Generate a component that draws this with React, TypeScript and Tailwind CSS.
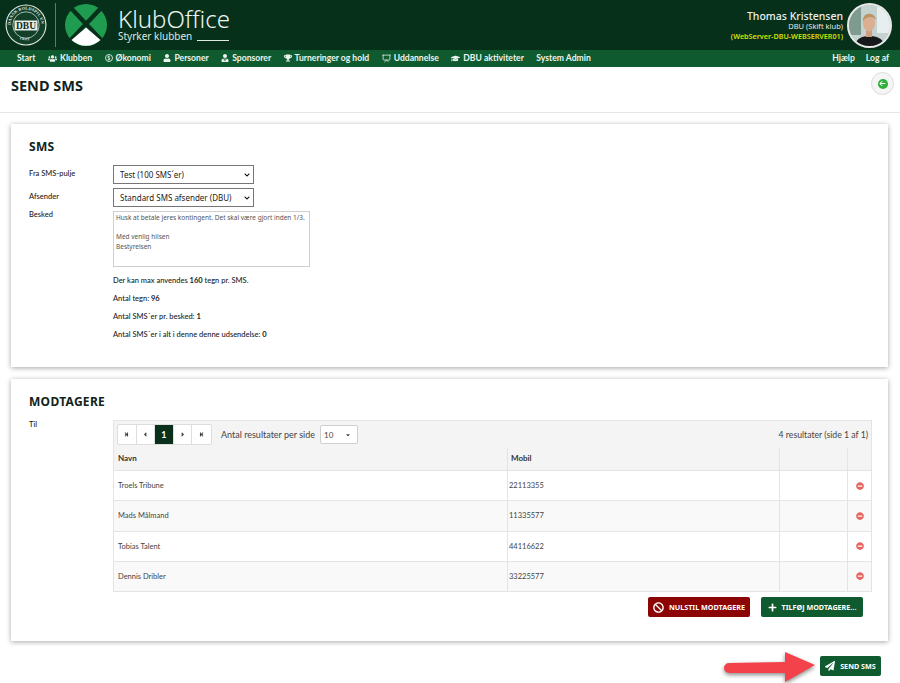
import { ReactNode } from "react";
import {
  FaBan,
  FaCaretDown,
  FaChevronDown,
  FaGraduationCap,
  FaMinusCircle,
  FaPaperPlane,
  FaPlus,
  FaStepBackward,
  FaStepForward,
  FaTrophy,
  FaUser,
  FaUserTie,
  FaUsers,
} from "react-icons/fa";
import { FaArrowLeft } from "react-icons/fa6";
import { Presentation } from "lucide-react";

const rows = [
  { name: "Troels Tribune", mobile: "22113355" },
  { name: "Mads Målmand", mobile: "11335577" },
  { name: "Tobias Talent", mobile: "44116622" },
  { name: "Dennis Dribler", mobile: "33225577" },
];

function DbuLogo() {
  return (
    <svg width="42" height="42" viewBox="0 0 42 42" className="shrink-0">
      <defs>
        <path id="ring-top" d="M5.6 21 a15.4 15.4 0 0 1 30.8 0" />
        <path id="ring-bottom" d="M10 32 a16.5 16.5 0 0 0 22 0" />
      </defs>
      <circle cx="21" cy="21" r="20.5" fill="#e4ebe6" />
      <circle cx="21" cy="21" r="19.4" fill="#123f27" />
      <text fontSize="4.2" fontWeight="600" fill="#e8eeea" fontFamily="'Liberation Serif', serif" letterSpacing="0.2">
        <textPath href="#ring-top">DANSK BOLDSPIL UNION</textPath>
      </text>
      <text fontSize="4.2" fontWeight="600" fill="#e8eeea" fontFamily="'Liberation Serif', serif" letterSpacing="0.6">
        <textPath href="#ring-bottom" startOffset="5">1889</textPath>
      </text>
      <circle cx="21" cy="21" r="13.2" fill="#123f27" stroke="#e4ebe6" strokeWidth="0.7" />
      <rect x="9.5" y="16.5" width="23" height="10" fill="#e8eeea" />
      <text x="21" y="25" textAnchor="middle" fontSize="9.5" fontWeight="800" fill="#0b2d19" fontFamily="'Liberation Serif', serif">
        DBU
      </text>
    </svg>
  );
}

function KlubLogo() {
  return (
    <svg width="42" height="42" viewBox="0 0 42 42" className="shrink-0">
      <circle cx="21" cy="21" r="21" fill="#1f9c50" />
      <path d="M5 3 L37 37 M37 3 L5 37" stroke="#06301a" strokeWidth="4.5" />
      <path d="M6.5 36 L21 23.5 L35.5 36 A21 21 0 0 1 6.5 36 Z" fill="#ffffff" />
    </svg>
  );
}

function Avatar() {
  return (
    <div className="h-[45px] w-[45px] shrink-0 overflow-hidden rounded-full border-2 border-[#e8e8e8] bg-[#b9c9c4]">
      <svg width="41" height="41" viewBox="0 0 41 41">
        <rect width="41" height="41" fill="#c4d3cf" />
        <rect x="0" y="0" width="12" height="30" fill="#7f9a8e" />
        <rect x="28" y="0" width="13" height="28" fill="#e6eeee" />
        <path d="M6 41 C7 33 14 31 20 31 C27 31 34 33 36 41 Z" fill="#16181a" />
        <rect x="17" y="25" width="6" height="7" fill="#d09d80" />
        <ellipse cx="20" cy="18" rx="6" ry="8.5" fill="#dcae92" />
        <path d="M14 16 C13 7 26 6 27 15 C24 11 18 11 14 16 Z" fill="#b99468" />
      </svg>
    </div>
  );
}

function NavItem({ icon, children }: { icon?: ReactNode; children: ReactNode }) {
  return (
    <a className="flex items-center gap-[3px] whitespace-nowrap font-['Lato',sans-serif] text-[8.6px] font-bold text-[#eef5f0]">
      {icon}
      {children}
    </a>
  );
}

function Card({ title, className, children }: { title: string; className: string; children: ReactNode }) {
  return (
    <section className={`ml-[11px] mr-[12px] bg-white pl-[18px] pr-[16px] pt-[15px] shadow-[0_1px_5px_rgba(0,0,0,0.35)] ${className}`}>
      <h2 className="text-[12px] font-bold leading-[15px] tracking-[0.3px] text-[#10241a]">{title}</h2>
      {children}
    </section>
  );
}

function FormSelect({ children }: { children: ReactNode }) {
  return (
    <div className="flex h-[19px] w-[141px] items-center justify-between border border-[#767676] bg-white pl-[6px] pr-[3px] text-[8px] text-[#222]">
      <span>{children}</span>
      <FaChevronDown className="text-[6px] text-black" />
    </div>
  );
}

function PagerButton({ children, active }: { children: ReactNode; active?: boolean }) {
  return (
    <div
      className={`flex h-[19px] w-[18.6px] items-center justify-center border-r border-[#ddd] text-[5px] last:border-r-0 ${
        active ? "bg-[#08301a] text-[9px] font-bold text-white" : "text-[#444]"
      }`}
    >
      {children}
    </div>
  );
}

export default function App() {
  return (
    <div className="relative h-[683px] w-[900px] overflow-hidden bg-white font-['Noto_Sans',sans-serif] text-[#222]">
      <header className="flex h-[50px] items-center bg-[#06301a] pl-[5px] pr-[8px]">
        <DbuLogo />
        <div className="ml-[8px] mr-[9px] h-[44px] w-px bg-[#5e7a69]" />
        <KlubLogo />
        <div className="ml-[11px] mt-[-2px] text-white">
          <div className="text-[24px] font-light leading-[25px] text-[#eef3ef]">KlubOffice</div>
          <div className="flex items-end gap-[5px] text-[10px] leading-[11px] text-[#dfe8e2]">
            Styrker klubben
            <span className="mb-px h-px w-[32px] bg-[#dfe8e2]" />
          </div>
        </div>
        <div className="ml-auto mr-[4px] mt-[2px] text-right">
          <div className="text-[10.5px] font-medium leading-[11px] text-[#f0f0f0]">Thomas Kristensen</div>
          <div className="text-[7.5px] leading-[9px] text-[#e8e8e8]">DBU (Skift klub)</div>
          <div className="text-[7.2px] font-semibold leading-[10px] text-[#d6e000]">(WebServer-DBU-WEBSERVER01)</div>
        </div>
        <Avatar />
      </header>

      <nav className="flex h-[17px] items-center bg-[#0f5a2e] pl-[17px] pr-[11px]">
        <div className="flex items-center gap-[12.5px]">
          <NavItem>Start</NavItem>
          <NavItem icon={<FaUsers className="text-[9px]" />}>Klubben</NavItem>
          <NavItem icon={<span className="flex h-[8px] w-[8px] items-center justify-center rounded-full border border-[#cfe0d5] text-[5px]">$</span>}>
            Økonomi
          </NavItem>
          <NavItem icon={<FaUser className="text-[8px]" />}>Personer</NavItem>
          <NavItem icon={<FaUserTie className="text-[8px]" />}>Sponsorer</NavItem>
          <NavItem icon={<FaTrophy className="text-[8px]" />}>Turneringer og hold</NavItem>
          <NavItem icon={<Presentation size={9} strokeWidth={2} />}>Uddannelse</NavItem>
          <NavItem icon={<FaGraduationCap className="text-[9px]" />}>DBU aktiviteter</NavItem>
          <NavItem>System Admin</NavItem>
        </div>
        <div className="ml-auto flex items-center gap-[11px]">
          <NavItem>Hjælp</NavItem>
          <NavItem>Log af</NavItem>
        </div>
      </nav>

      <div className="flex h-[46px] items-start justify-between border-b border-[#e6e6e6] pl-[11px] pr-[6px]">
        <h1 className="mt-[9px] text-[14.5px] font-bold leading-[18px] text-[#10241a]">SEND SMS</h1>
        <button className="mt-[5px] flex h-[23px] w-[23px] items-center justify-center rounded-full border border-[#dcdcdc] bg-[#f5f5f5]">
          <span className="flex h-[10px] w-[10px] items-center justify-center rounded-full bg-[#2fae3a]">
            <FaArrowLeft className="text-[7px] text-white" />
          </span>
        </button>
      </div>

      <Card title="SMS" className="mt-[11px] h-[243px]">
        <div className="mt-[11px] grid grid-cols-[84px_1fr] font-['Lato',sans-serif] text-[7.5px] font-medium text-[#222]">
          <div className="leading-[18px]">Fra SMS-pulje</div>
          <div className="font-['Noto_Sans',sans-serif] font-normal">
            <FormSelect>Test (100 SMS´er)</FormSelect>
          </div>
          <div className="mt-[4px] leading-[18px]">Afsender</div>
          <div className="mt-[4px] font-['Noto_Sans',sans-serif] font-normal">
            <FormSelect>Standard SMS afsender (DBU)</FormSelect>
          </div>
          <div className="mt-[1px] leading-[14px]">Besked</div>
          <div className="mt-[4px]">
            <div className="h-[56px] w-[197px] border border-[#cfcfcf] px-[2px] py-[1px] font-['Noto_Sans',sans-serif] text-[6.5px] font-normal leading-[9.5px] text-[#555]">
              Husk at betale jeres kontingent. Det skal være gjort inden 1/3.
              <br />
              <br />
              Med venlig hilsen
              <br />
              Bestyrelsen
            </div>
            <p className="mt-[8px] leading-[11px]">
              Der kan max anvendes <b>160</b> tegn pr. SMS.
            </p>
            <p className="mt-[7px] leading-[11px]">
              Antal tegn: <b>96</b>
            </p>
            <p className="mt-[6.5px] leading-[11px]">
              Antal SMS´er pr. besked: <b>1</b>
            </p>
            <p className="mt-[7px] leading-[11px]">
              Antal SMS´er i alt i denne denne udsendelse: <b>0</b>
            </p>
          </div>
        </div>
      </Card>

      <Card title="MODTAGERE" className="mt-[12px] h-[262px]">
        <div className="mt-[10px] grid grid-cols-[84px_1fr]">
          <div className="font-['Lato',sans-serif] text-[7.5px] font-medium leading-[11px]">Til</div>
          <div>
            <div className="mt-px border border-[#e4e4e4] font-['Lato',sans-serif]">
              <div className="bg-[#f4f4f4]">
                <div className="flex h-[27px] items-center pl-[3px] pr-[3px] text-[9px] text-[#444]">
                  <div className="flex overflow-hidden rounded-[2px] border border-[#ddd] bg-white">
                    <PagerButton><FaStepBackward /></PagerButton>
                    <PagerButton><FaCaretDown className="rotate-90 text-[7px]" /></PagerButton>
                    <PagerButton active>1</PagerButton>
                    <PagerButton><FaCaretDown className="-rotate-90 text-[7px]" /></PagerButton>
                    <PagerButton><FaStepForward /></PagerButton>
                  </div>
                  <span className="ml-[9px]">Antal resultater per side</span>
                  <div className="ml-[5px] flex h-[19px] w-[38px] items-center justify-between rounded-[2px] border border-[#cfcfcf] bg-white pl-[3px] pr-[6px] text-[8px]">
                    10
                    <FaCaretDown className="text-[6px]" />
                  </div>
                  <span className="ml-auto text-[8.7px]">4 resultater (side 1 af 1)</span>
                </div>
                <div className="grid h-[22px] grid-cols-[393px_272px_68px_1fr] text-[8px] font-bold leading-[20px] text-[#333]">
                  <div className="pl-[4px]">Navn</div>
                  <div className="border-l border-[#e4e4e4] pl-[3px]">Mobil</div>
                  <div className="border-l border-[#e4e4e4]" />
                  <div className="border-l border-[#e4e4e4]" />
                </div>
              </div>
              {rows.map((row, index) => (
                <div
                  key={row.mobile}
                  className={`grid h-[30.25px] grid-cols-[393px_272px_68px_1fr] border-t border-[#e4e4e4] text-[7.5px] text-[#444] ${
                    index % 2 === 1 ? "bg-[#f9f9f9]" : "bg-white"
                  }`}
                >
                  <div className="flex items-center pl-[4px]">{row.name}</div>
                  <div className="flex items-center border-l border-[#e4e4e4] pl-[1px]">{row.mobile}</div>
                  <div className="border-l border-[#e4e4e4]" />
                  <div className="flex items-center justify-center border-l border-[#e4e4e4]">
                    <FaMinusCircle className="text-[8px] text-[#e8645f]" />
                  </div>
                </div>
              ))}
            </div>
            <div className="mt-[5px] flex justify-end gap-[11px] pr-[9px]">
              <button className="flex h-[20px] w-[102px] items-center justify-center gap-[5px] rounded-[2px] bg-[#8c0404] text-[7.2px] font-bold text-white">
                <FaBan className="text-[11px]" />
                NULSTIL MODTAGERE
              </button>
              <button className="flex h-[20px] w-[102px] items-center justify-center gap-[5px] rounded-[2px] bg-[#0f5a2e] text-[7.2px] font-bold text-white">
                <FaPlus className="text-[9px]" />
                TILFØJ MODTAGERE...
              </button>
            </div>
          </div>
        </div>
      </Card>

      <div className="mt-[15px] flex justify-end pr-[19px]">
        <button className="flex h-[20px] w-[61px] items-center justify-center gap-[5px] rounded-[2px] bg-[#0f5a2e] text-[7.2px] font-bold text-white">
          <FaPaperPlane className="text-[10px]" />
          SEND SMS
        </button>
      </div>

      {/* red annotation arrow on top of the page */}
      <svg width="100" height="34" viewBox="0 0 100 34" className="absolute left-[722px] top-[649px] drop-shadow-[0_2px_2px_rgba(0,0,0,0.45)]">
        <path d="M7 14 L63 13 L63 3 L93 16 L63 33 L63 24 L7 24 A5 5 0 0 1 7 14 Z" fill="#f4424a" />
      </svg>
    </div>
  );
}
